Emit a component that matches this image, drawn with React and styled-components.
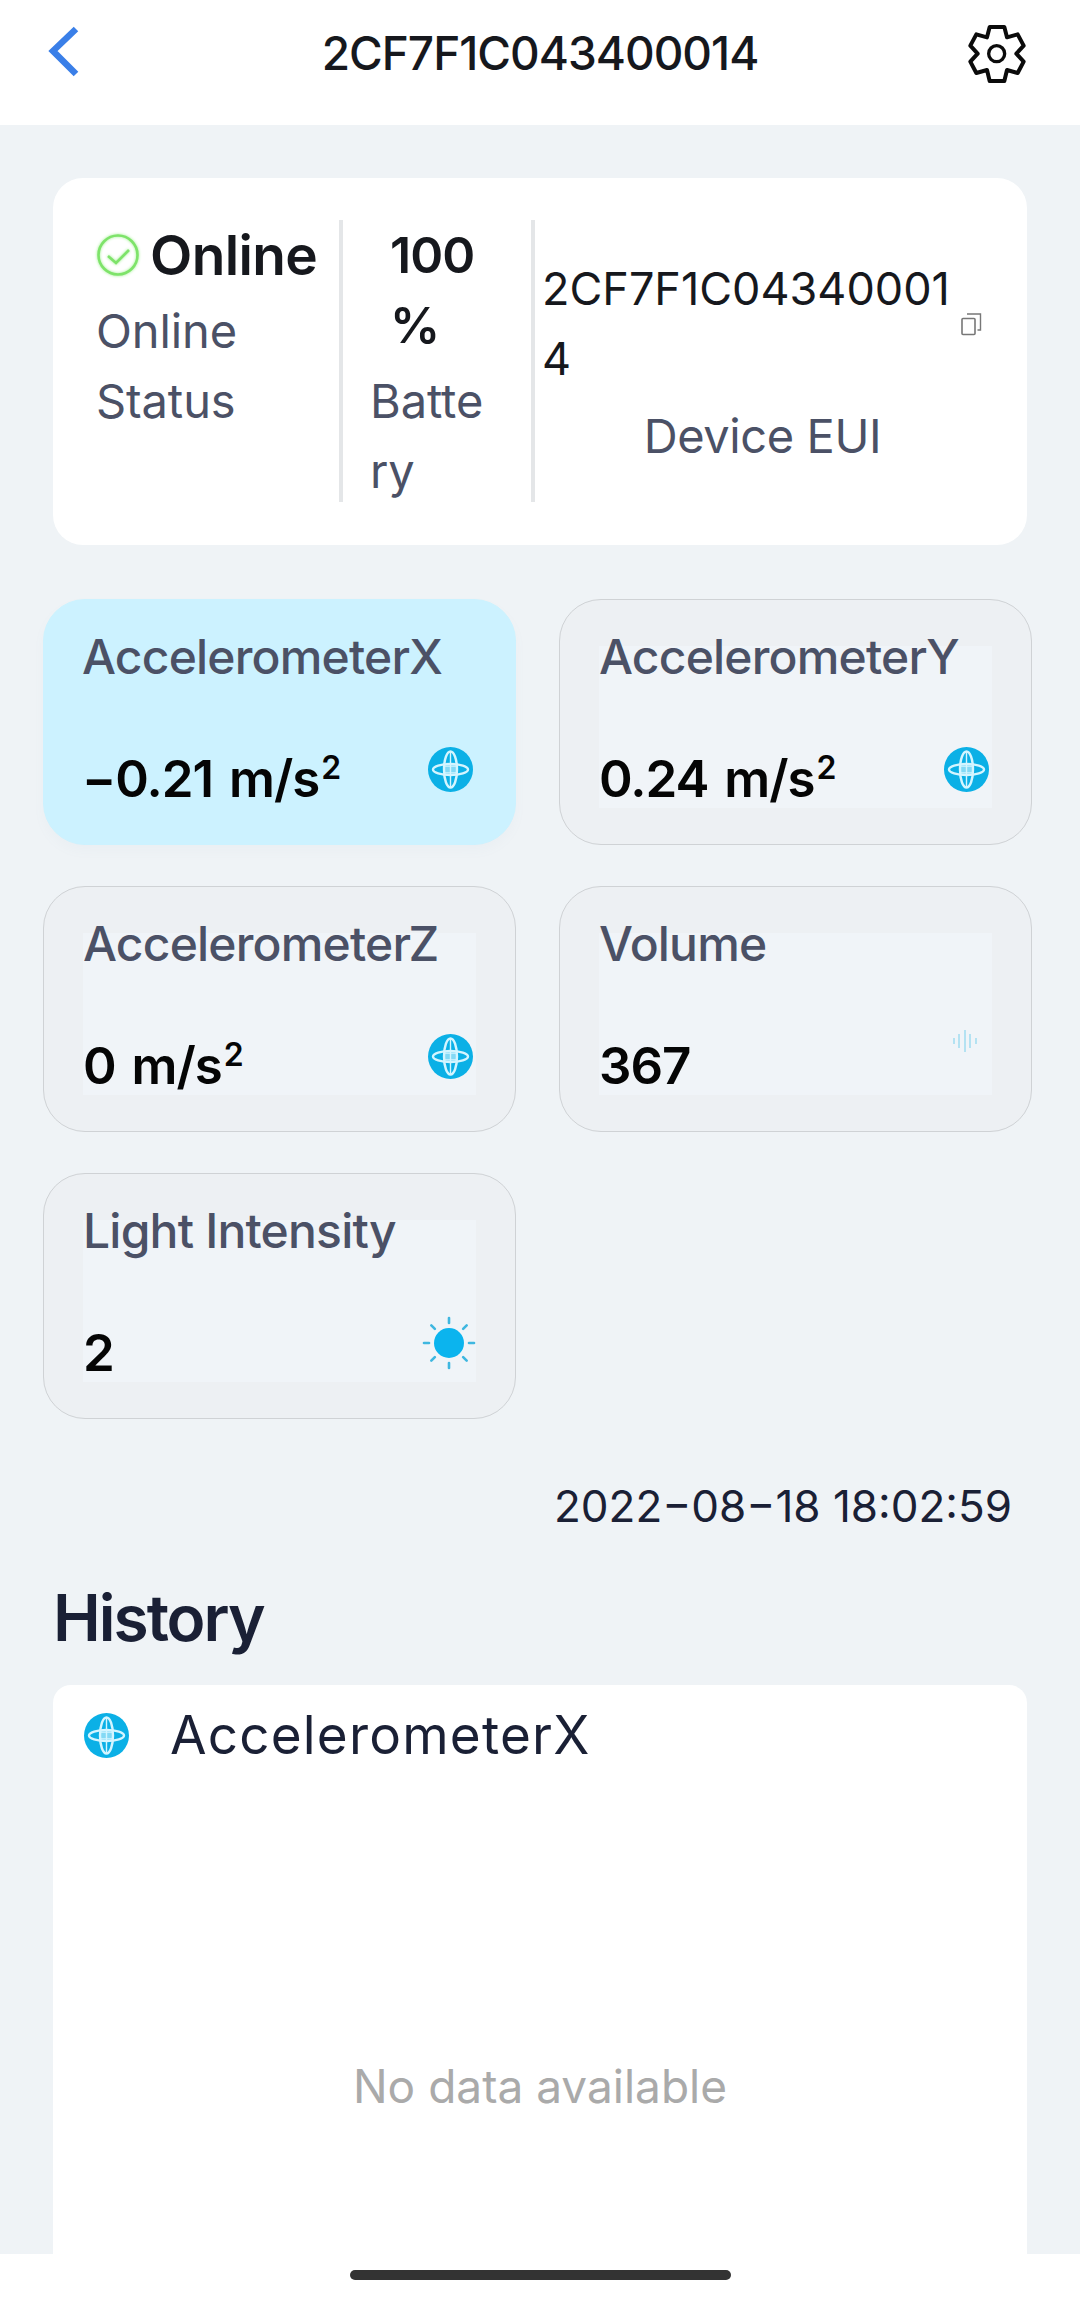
import React from 'react'
import styled, { createGlobalStyle } from 'styled-components'

const GlobalStyle = createGlobalStyle`
  html, body {
    margin: 0;
    padding: 0;
    background: #eff3f6;
    font-family: Inter, "Noto Sans", sans-serif;
  }
`

const Page = styled.div`
  position: relative;
  width: 1080px;
  height: 2297px;
  overflow: hidden;
  background: #eff3f6;
  display: flex;
  flex-direction: column;
`

const Header = styled.header`
  height: 125px;
  flex: none;
  background: #fff;
  display: grid;
  grid-template-columns: 1fr auto 1fr;
  align-items: start;
  padding: 23px 46px 0;
  box-sizing: border-box;
  svg:last-child {
    justify-self: end;
    margin-right: 7px;
  }
`

const HeaderTitle = styled.div`
  font-size: 46px;
  line-height: 60px;
  font-weight: 500;
  color: #16181d;
  letter-spacing: -1px;
`

const InfoCard = styled.section`
  margin: 53px 53px 0;
  height: 367px;
  box-sizing: border-box;
  padding: 42px 0 43px;
  background: #fff;
  border-radius: 30px;
  display: flex;
`

const StatusCol = styled.div`
  width: 286px;
  flex: none;
  padding-left: 43px;
  box-sizing: border-box;
`

const BatteryCol = styled.div`
  width: 192px;
  flex: none;
  border-left: 4px solid #e4e6e8;
  padding-left: 27px;
  box-sizing: border-box;
`

const EuiCol = styled.div`
  flex: 1;
  border-left: 4px solid #e4e6e8;
  padding: 3px 44px 0 7px;
  display: flex;
  flex-direction: column;
  justify-content: center;
`

const StatusRow = styled.div`
  display: flex;
  align-items: center;
  gap: 10px;
  height: 70px;
`

const BigValue = styled.div`
  font-size: 50px;
  line-height: 70px;
  font-weight: 600;
  color: #16181d;
  letter-spacing: -1px;
  margin-left: ${(p) => p.$indent || 0}px;
`

const StatusValue = styled(BigValue)`
  font-size: 55px;
  letter-spacing: -0.6px;
`

const Label = styled.div`
  font-size: 47px;
  line-height: 70px;
  color: #4b5166;
  letter-spacing: ${(p) => (p.$center ? '-0.4px' : '-0.1px')};
  text-align: ${(p) => (p.$center ? 'center' : 'left')};
  margin-top: ${(p) => p.$top || 0}px;
`

const EuiRow = styled.div`
  display: flex;
  align-items: center;
  justify-content: space-between;
  margin-bottom: 7px;
`

const EuiValue = styled.div`
  font-size: 45px;
  line-height: 70px;
  color: #16181d;
`

const MetricGrid = styled.section`
  margin: 54px 48px 0 43px;
  display: grid;
  grid-template-columns: 473px 473px;
  grid-auto-rows: 246px;
  column-gap: 43px;
  row-gap: 41px;
`

const MetricCard = styled.div`
  box-sizing: border-box;
  padding: 46px 39px 36px ${(p) => (p.$active ? 38 : 39)}px;
  border-radius: 42px;
  background: ${(p) => (p.$active ? '#ccf2ff' : '#edf0f3')};
  border: 1.5px solid ${(p) => (p.$active ? '#ccf2ff' : '#cfd2d5')};
  box-shadow: ${(p) => (p.$active ? '0 6px 12px rgba(120,160,190,0.04)' : 'none')};
  display: flex;
`

const MetricInner = styled.div`
  flex: 1;
  display: flex;
  flex-direction: column;
  justify-content: space-between;
  background: ${(p) => (p.$active ? 'transparent' : '#f0f4f8')};
`

const MetricTitle = styled.div`
  font-size: 48px;
  line-height: 22px;
  font-weight: 500;
  color: #4b5166;
  letter-spacing: -0.8px;
`

const MetricRow = styled.div`
  display: flex;
  justify-content: space-between;
  align-items: flex-start;
  height: 58px;
`

const MetricValue = styled.div`
  font-size: 51px;
  line-height: 58px;
  font-weight: 600;
  color: #050505;
  letter-spacing: -1px;
  word-spacing: 4px;
  sup {
    font-size: 32px;
    line-height: 0;
    vertical-align: 18px;
    font-weight: 600;
    margin-left: 2px;
  }
`

const IconSlot = styled.div`
  display: flex;
  flex: none;
  margin: ${(p) => p.$margin || '-3px 3px 0 0'};
`

const Timestamp = styled.div`
  margin: 57px 68px 0 0;
  text-align: right;
  font-size: 44px;
  line-height: 60px;
  color: #1a2035;
`

const HistoryTitle = styled.h2`
  margin: 42px 0 0 53px;
  font-size: 64px;
  line-height: 80px;
  font-weight: 600;
  color: #1a2035;
  letter-spacing: -2px;
`

const HistoryCard = styled.section`
  margin: 27px 53px 0;
  flex: 1;
  background: #fff;
  border-radius: 18px 18px 0 0;
  display: flex;
  flex-direction: column;
`

const HistoryHead = styled.div`
  display: flex;
  align-items: center;
  gap: 41px;
  padding: 25px 31px 0;
`

const HistoryName = styled.div`
  font-size: 53px;
  line-height: 50px;
  color: #1a2035;
  letter-spacing: 1.2px;
`

const EmptyText = styled.div`
  margin-top: 296px;
  text-align: center;
  font-size: 46px;
  line-height: 60px;
  color: #aaaaaa;
`

const HomeBar = styled.div`
  position: absolute;
  left: 0;
  right: 0;
  bottom: 0;
  height: 43px;
  background: #fff;
  display: flex;
  justify-content: center;
  padding-top: 16px;
  box-sizing: border-box;
`

const HomeIndicator = styled.div`
  width: 381px;
  height: 10px;
  border-radius: 5px;
  background: #333;
`

function BackIcon() {
  return (
    <svg width="40" height="60" viewBox="0 0 40 60" fill="none">
      <polyline points="30,6 7,28 30,51" stroke="#3a7fe8" strokeWidth="6.5" />
    </svg>
  )
}

function GearIcon() {
  return (
    <svg width="60" height="62" viewBox="110 62 180 186" fill="none" stroke="#0b0b0b">
      <path
        d="M178 74 H222 L230 105 L262 96 L280 130 L258 154 L280 178 L262 212 L230 203 L222 236 H178 L170 203 L138 212 L120 178 L142 154 L120 130 L138 96 L170 105 Z"
        strokeWidth="12"
        strokeLinejoin="round"
      />
      <circle cx="199" cy="154" r="24" strokeWidth="10" />
    </svg>
  )
}

function CheckIcon() {
  return (
    <svg width="44" height="44" viewBox="0 0 44 44" fill="none" style={{ filter: 'drop-shadow(0 0 1.5px #9cf08c)' }}>
      <circle cx="22" cy="22" r="19.5" stroke="#7ee36a" strokeWidth="2.6" />
      <polyline points="12,23 20,30 33,17" stroke="#7ee36a" strokeWidth="2.6" />
    </svg>
  )
}

function CopyIcon() {
  return (
    <svg width="22" height="24" viewBox="0 0 22 24" fill="none" stroke="#777">
      <rect x="1" y="6.5" width="13" height="16" rx="1" strokeWidth="1.6" />
      <path d="M6 2 H19.5 V18 H16.5" strokeWidth="1.4" />
    </svg>
  )
}

function GlobeIcon() {
  return (
    <svg width="45" height="45" viewBox="0 0 45 45" fill="none" stroke="#d4f5ff">
      <circle cx="22.5" cy="22.5" r="22.5" fill="#0bb0e6" stroke="none" />
      <ellipse cx="22.5" cy="22.5" rx="6.5" ry="18" strokeWidth="2.4" />
      <ellipse cx="22.5" cy="22.5" rx="17.5" ry="5.6" strokeWidth="2.4" />
      <path d="M22.5 5 V40 M17 19 H28 M17 26 H28" strokeWidth="1.4" />
      <rect x="17" y="19" width="11" height="7" fill="#d4f5ff" stroke="none" opacity="0.6" />
    </svg>
  )
}

function VolumeIcon() {
  return (
    <svg width="26" height="22" viewBox="0 0 26 22" fill="#b4e2f2">
      <rect x="1" y="8" width="2" height="6" />
      <rect x="6" y="4" width="2" height="14" />
      <rect x="12" y="0" width="2" height="22" />
      <rect x="17" y="4" width="2" height="14" />
      <rect x="23" y="8" width="2" height="6" />
    </svg>
  )
}

function SunIcon() {
  const rays = [0, 45, 90, 135, 180, 225, 270, 315]
  return (
    <svg width="54" height="54" viewBox="0 0 54 54">
      <circle cx="27" cy="27" r="15" fill="#0bb4ee" />
      {rays.map((a) => (
        <line
          key={a}
          x1="27"
          y1="2"
          x2="27"
          y2="7"
          stroke="#3fb7e0"
          strokeWidth="2.6"
          strokeLinecap="round"
          transform={`rotate(${a} 27 27)`}
        />
      ))}
    </svg>
  )
}

const metrics = [
  { title: 'AccelerometerX', value: '−0.21 m/s', unit: true, active: true, icon: <GlobeIcon /> },
  { title: 'AccelerometerY', value: '0.24 m/s', unit: true, icon: <GlobeIcon /> },
  { title: 'AccelerometerZ', value: '0 m/s', unit: true, icon: <GlobeIcon /> },
  { title: 'Volume', value: '367', icon: <VolumeIcon />, iconMargin: '-7px 14px 0 0' },
  { title: 'Light Intensity', value: '2', icon: <SunIcon />, iconMargin: '-8px 0 0 0' },
]

export default function App() {
  return (
    <Page>
      <GlobalStyle />
      <Header>
        <BackIcon />
        <HeaderTitle>2CF7F1C043400014</HeaderTitle>
        <GearIcon />
      </Header>

      <InfoCard>
        <StatusCol>
          <StatusRow>
            <CheckIcon />
            <StatusValue>Online</StatusValue>
          </StatusRow>
          <Label $top={6}>
            Online
            <br />
            Status
          </Label>
        </StatusCol>
        <BatteryCol>
          <BigValue $indent={20}>
            100
            <br />%
          </BigValue>
          <Label $top={6}>
            Batte
            <br />
            ry
          </Label>
        </BatteryCol>
        <EuiCol>
          <EuiRow>
            <EuiValue>
              2CF7F1C04340001
              <br />4
            </EuiValue>
            <CopyIcon />
          </EuiRow>
          <Label $center>Device EUI</Label>
        </EuiCol>
      </InfoCard>

      <MetricGrid>
        {metrics.map((m) => (
          <MetricCard key={m.title} $active={m.active}>
            <MetricInner $active={m.active}>
              <MetricTitle>{m.title}</MetricTitle>
              <MetricRow>
                <MetricValue>
                  {m.value}
                  {m.unit && <sup>2</sup>}
                </MetricValue>
                <IconSlot $margin={m.iconMargin}>{m.icon}</IconSlot>
              </MetricRow>
            </MetricInner>
          </MetricCard>
        ))}
      </MetricGrid>

      <Timestamp>2022−08−18 18:02:59</Timestamp>
      <HistoryTitle>History</HistoryTitle>

      <HistoryCard>
        <HistoryHead>
          <GlobeIcon />
          <HistoryName>AccelerometerX</HistoryName>
        </HistoryHead>
        <EmptyText>No data available</EmptyText>
      </HistoryCard>

      <HomeBar>
        <HomeIndicator />
      </HomeBar>
    </Page>
  )
}
